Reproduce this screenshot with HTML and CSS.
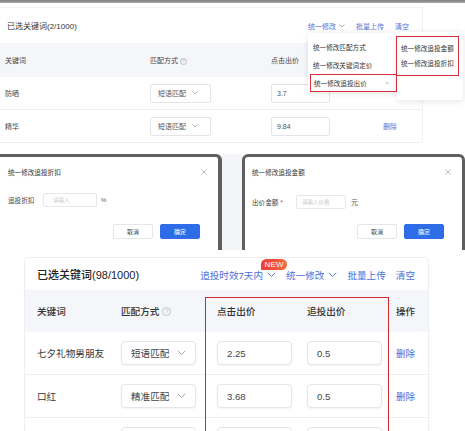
FILE: index.html
```html
<!DOCTYPE html>
<html lang="zh">
<head>
<meta charset="utf-8">
<link rel="stylesheet" href="styles.css">
</head>
<body>
<section class="s1">
  <div class="topbar"></div>
  <div class="card1">
    <div class="c1-head">
      <div class="c1-title">已选关键词(2/1000)</div>
      <div class="c1-links">
        <span class="lnk">统一修改 <svg class="chev" width="6" height="4" viewBox="0 0 6 4"><polyline points="0.5,0.5 3,3 5.5,0.5" fill="none" stroke="#8a93a6" stroke-width="0.8"/></svg></span>
        <span class="lnk">批量上传</span>
        <span class="lnk">清空</span>
      </div>
    </div>
    <div class="t1 t1-head">
      <div>关键词</div>
      <div>匹配方式 <span class="q1">?</span></div>
      <div>点击出价</div>
      <div></div>
    </div>
    <div class="t1 t1-row">
      <div>防晒</div>
      <div><span class="sel1">短语匹配 <svg class="chev" width="6" height="4" viewBox="0 0 6 4"><polyline points="0.5,0.5 3,3 5.5,0.5" fill="none" stroke="#9aa1ad" stroke-width="0.8"/></svg></span></div>
      <div><span class="inp1">3.7</span></div>
      <div></div>
    </div>
    <div class="t1 t1-row">
      <div>精华</div>
      <div><span class="sel1">短语匹配 <svg class="chev" width="6" height="4" viewBox="0 0 6 4"><polyline points="0.5,0.5 3,3 5.5,0.5" fill="none" stroke="#9aa1ad" stroke-width="0.8"/></svg></span></div>
      <div><span class="inp1">9.84</span></div>
      <div class="del1">删除</div>
    </div>
  </div>
  <div class="menu1">
    <div class="mi">统一修改匹配方式</div>
    <div class="mi">统一修改关键词定价</div>
    <div class="mi mi-hl">统一修改追投出价 <span class="gt">&gt;</span></div>
  </div>
  <div class="menu2">
    <div class="m2-box">
      <div class="mi2">统一修改追投金额</div>
      <div class="mi2">统一修改追投折扣</div>
    </div>
  </div>
</section>

<section class="s2">
  <div class="pane pane-l">
    <div class="dlg-head">
      <span class="dlg-title">统一修改追投折扣</span>
      <svg class="x" width="6" height="6" viewBox="0 0 6 6"><path d="M0.5 0.5 L5.5 5.5 M5.5 0.5 L0.5 5.5" stroke="#a0a4ab" stroke-width="0.7"/></svg>
    </div>
    <div class="dlg-form">
      <span class="lbl">追投折扣</span>
      <span class="dinp dinp-l">请输入</span>
      <span class="unit">%</span>
    </div>
    <div class="dlg-foot">
      <span class="btn">取消</span>
      <span class="btn btn-p">确定</span>
    </div>
  </div>
  <div class="gapfill"></div>
  <div class="pane pane-r">
    <div class="dlg-head">
      <span class="dlg-title">统一修改追投金额</span>
      <svg class="x" width="6" height="6" viewBox="0 0 6 6"><path d="M0.5 0.5 L5.5 5.5 M5.5 0.5 L0.5 5.5" stroke="#a0a4ab" stroke-width="0.7"/></svg>
    </div>
    <div class="dlg-form dlg-form-r">
      <span class="lbl lbl-r">出价金额 <span class="req">*</span></span>
      <span class="dinp dinp-r">请输入价格</span>
      <span class="unit unit-r">元</span>
    </div>
    <div class="dlg-foot dlg-foot-r">
      <span class="btn">取消</span>
      <span class="btn btn-p">确定</span>
    </div>
  </div>
</section>

<section class="s3">
  <div class="card3">
    <div class="c3-head">
      <div class="c3-title">已选关键词(98/1000)</div>
      <div class="c3-links">
        <span class="lnk3 lnk-new">追投时效7天内 <svg class="chev3" width="9" height="6" viewBox="0 0 9 6"><polyline points="0.8,0.8 4.5,4.5 8.2,0.8" fill="none" stroke="#5b7be0" stroke-width="1"/></svg><span class="badge">NEW</span></span>
        <span class="lnk3">统一修改 <svg class="chev3" width="9" height="6" viewBox="0 0 9 6"><polyline points="0.8,0.8 4.5,4.5 8.2,0.8" fill="none" stroke="#5b7be0" stroke-width="1"/></svg></span>
        <span class="lnk3">批量上传</span>
        <span class="lnk3">清空</span>
      </div>
    </div>
    <div class="t3 t3-head">
      <div>关键词</div>
      <div>匹配方式 <span class="q3">?</span></div>
      <div>点击出价</div>
      <div>追投出价</div>
      <div>操作</div>
    </div>
    <div class="t3 t3-row">
      <div>七夕礼物男朋友</div>
      <div><span class="sel3">短语匹配 <svg class="chev3" width="9" height="6" viewBox="0 0 9 6"><polyline points="0.8,0.8 4.5,4.5 8.2,0.8" fill="none" stroke="#a3a9b4" stroke-width="1"/></svg></span></div>
      <div><span class="inp3">2.25</span></div>
      <div><span class="inp3">0.5</span></div>
      <div class="del3">删除</div>
    </div>
    <div class="t3 t3-row">
      <div>口红</div>
      <div><span class="sel3">精准匹配 <svg class="chev3" width="9" height="6" viewBox="0 0 9 6"><polyline points="0.8,0.8 4.5,4.5 8.2,0.8" fill="none" stroke="#a3a9b4" stroke-width="1"/></svg></span></div>
      <div><span class="inp3">3.68</span></div>
      <div><span class="inp3">0.5</span></div>
      <div class="del3">删除</div>
    </div>
    <div class="t3 t3-row">
      <div></div>
      <div><span class="sel3"></span></div>
      <div><span class="inp3"></span></div>
      <div><span class="inp3"></span></div>
      <div></div>
    </div>
    <div class="redbox"></div>
  </div>
</section>
</body>
</html>
```
FILE: styles.css
```css
* { box-sizing: border-box; margin: 0; padding: 0; }
html, body { width: 465px; height: 431px; overflow: hidden; background: #fff; }
body {
  font-family: "Liberation Sans", "Noto Sans CJK SC", sans-serif;
  color: #333;
}

/* ---------- section 1 ---------- */
.s1 { position: relative; height: 145px; overflow: hidden; }
.topbar { height: 3px; background: linear-gradient(#7f7f7f, #a9a9a9); }
.card1 {
  margin-top: 4px;
  width: 423px;
  border-top: 1px solid #f1f2f4;
  border-right: 1px solid #f1f2f4;
}
.c1-head {
  height: 35px;
  display: flex;
  align-items: center;
  justify-content: space-between;
  padding: 0 13px 0 7px;
}
.c1-title { font-size: 8px; color: #333; }
.c1-links { display: flex; gap: 11px; font-size: 7px; color: #5073d8; align-items: center; }
.lnk { display: flex; align-items: center; gap: 3px; }
.t1 {
  display: grid;
  grid-template-columns: 145px 121px 112px 1fr;
  align-items: center;
  padding-left: 5px;
  font-size: 7px;
}
.t1-head { height: 34px; background: #f5f6f9; color: #444; }
.t1-row { height: 33px; border-bottom: 1px solid #eff0f3; color: #444; }
.q1 {
  display: inline-flex; align-items: center; justify-content: center;
  width: 7px; height: 7px; border: 0.6px solid #b9bdc4; border-radius: 50%;
  font-size: 5px; color: #b9bdc4; vertical-align: middle;
}
.sel1, .inp1 {
  display: flex; align-items: center;
  height: 19px;
  border: 1px solid #e3e5ea;
  border-radius: 2px;
  background: #fff;
  font-size: 7px;
  color: #555;
}
.sel1 { width: 61px; padding-left: 7px; gap: 6px; }
.inp1 { width: 59px; padding-left: 5px; }
.del1 { color: #5073d8; }

.menu1 {
  position: absolute; left: 308px; top: 33px;
  width: 89px; height: 59px;
  background: #fff;
  box-shadow: 0 1px 6px rgba(0,0,0,0.12);
  padding-top: 5px;
  font-size: 6.6px; color: #333;
}
.mi { height: 18px; display: flex; align-items: center; padding-left: 5px; }
.mi-hl {
  margin-left: 2px; padding-left: 3px;
  border: 1.5px solid #d92f3c;
  justify-content: space-between; padding-right: 7px;
}
.gt { color: #999; font-size: 6px; }
.menu2 {
  position: absolute; left: 397px; top: 32px;
  width: 66px; height: 68px;
  background: #fff;
  box-shadow: 0 1px 6px rgba(0,0,0,0.12);
  padding-top: 4px;
  font-size: 6.6px; color: #333;
}
.m2-box {
  margin-left: -1px;
  width: 63px; height: 40px;
  border: 1.5px solid #d92f3c;
  padding-top: 3px;
}
.mi2 { height: 15px; display: flex; align-items: center; padding-left: 4px; }

/* ---------- section 2 ---------- */
.s2 { height: 110px; padding-top: 9px; display: flex; }
.pane {
  height: 96px;
  background: #fff;
  border-top: 3px solid #5f5f5f;
  font-size: 6.6px;
  color: #333;
}
.pane-l {
  width: 222px;
  border-right: 4px solid #5f5f5f;
  border-top-right-radius: 6px;
  padding: 0 11px 0 8px;
}
.gapfill { width: 20px; height: 96px; background: #f4f5f8; }
.pane-r {
  width: 223px;
  border-left: 3px solid #5f5f5f;
  border-right: 3px solid #5f5f5f;
  border-top-left-radius: 6px;
  border-top-right-radius: 6px;
  padding: 0 11px 0 7px;
}
.dlg-head {
  height: 30px;
  display: flex; align-items: center; justify-content: space-between;
}
.dlg-title { color: #333; }
.dlg-form { height: 20px; margin-top: 3px; display: flex; align-items: center; }
.dlg-form-r { margin-top: 5px; }
.lbl { width: 35px; color: #444; }
.lbl-r { width: 44px; }
.req { color: #e03a3a; }
.dinp {
  display: flex; align-items: center;
  height: 14px;
  border: 1px solid #e6e8ec; border-radius: 2px;
  color: #c4c7cd; font-size: 5.5px;
}
.dinp-l { width: 54px; padding-left: 9px; }
.dinp-r { width: 50px; padding-left: 5px; }
.unit { margin-left: 4px; color: #555; font-size: 6px; }
.unit-r { margin-left: 5px; font-size: 7px; }
.dlg-foot {
  margin-top: 14px;
  display: flex; justify-content: flex-end; gap: 7px;
  padding-right: 7px;
}
.dlg-foot-r { margin-top: 12px; }
.btn {
  width: 40px; height: 15px;
  display: flex; align-items: center; justify-content: center;
  border: 1px solid #e4e6ea; border-radius: 2px;
  font-size: 6px; color: #444; background: #fff;
}
.btn-p { background: #2e6ce8; border-color: #2e6ce8; color: #fff; }

/* ---------- section 3 ---------- */
.s3 { height: 176px; padding-top: 2px; }
.card3 {
  position: relative;
  margin-left: 24px;
  width: 405px;
  height: 190px;
  border: 1px solid #eceef2;
  border-radius: 5px;
  overflow: hidden;
}
.c3-head {
  height: 32px;
  display: flex; align-items: center; justify-content: space-between;
  padding: 0 13px 0 12px;
}
.c3-title { font-size: 11px; color: #222; font-weight: 500; }
.c3-links { display: flex; align-items: center; gap: 10px; font-size: 9.6px; color: #4a6fd8; padding-top: 1px; }
.lnk3 { display: flex; align-items: center; gap: 4px; }
.lnk-new { position: relative; }
.badge {
  position: absolute; left: 61px; top: -9px;
  width: 26px; height: 11px;
  display: flex; align-items: center; justify-content: center;
  background: linear-gradient(90deg, #ee3a3c, #f46a3a);
  border-radius: 6px 6px 6px 1px;
  color: #fff; font-size: 8px; letter-spacing: 0.2px;
}
.t3 {
  display: grid;
  grid-template-columns: 84px 96px 90px 89px 1fr;
  align-items: center;
  padding-left: 12px;
  font-size: 9.6px;
  color: #333;
}
.t3-head { height: 42px; background: #f5f6f9; font-weight: 500; color: #333; }
.t3-row { height: 43px; border-bottom: 1px solid #eff0f3; }
.q3 {
  display: inline-flex; align-items: center; justify-content: center;
  width: 9px; height: 9px; border: 0.8px solid #c1c5cc; border-radius: 50%;
  font-size: 6.5px; color: #c1c5cc; vertical-align: 1px; font-weight: 400;
}
.sel3, .inp3 {
  display: flex; align-items: center;
  width: 75px; height: 24px;
  border: 1px solid #e3e6eb;
  border-radius: 4px;
  box-shadow: 0 1px 2px rgba(0,0,0,0.05);
  background: #fff;
  font-size: 9.6px; color: #444;
}
.sel3 { padding-left: 9px; gap: 8px; }
.inp3 { padding-left: 9px; }
.del3 { color: #4a6fd8; }
.redbox {
  position: absolute; left: 180px; top: 39px;
  width: 184px; height: 200px;
  border: 1.5px solid #d3262c;
}
```
